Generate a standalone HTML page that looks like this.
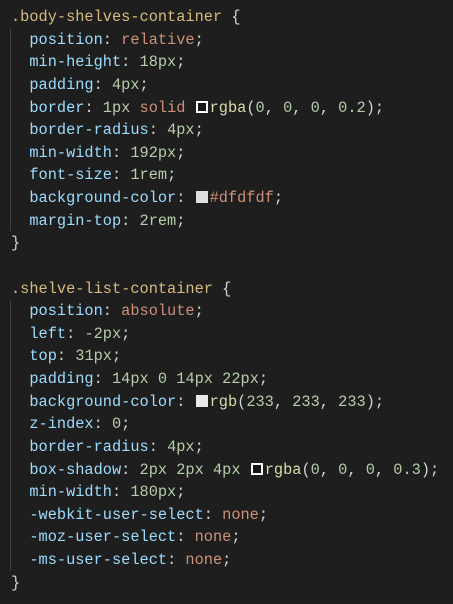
<!DOCTYPE html>
<html><head><meta charset="utf-8"><style>
html,body{margin:0;padding:0;background:#1e1e1e;width:453px;height:604px;overflow:hidden}
pre{margin:0;padding:6px 0 0 11px;font-family:"Liberation Mono",monospace;font-size:15.3px;line-height:22.62px;color:#d4d4d4;position:relative}
.s{color:#d7ba7d}.p{color:#9cdcfe}.v{color:#ce9178}.n{color:#b5cea8}.f{color:#dcdcaa}.b{color:#d4d4d4}
.sw{display:inline-block;width:8px;height:8px;border:2px solid #fff;vertical-align:-1px;margin:0 2px 0 1px}
.g{position:absolute;left:10px;width:1px;background:#404040}
</style></head><body>
<div class="g" style="top:28px;height:203px"></div>
<div class="g" style="top:300px;height:271px"></div>
<pre><span class="s">.body-shelves-container</span> <span class="b">{</span>
  <span class="p">position</span>: <span class="v">relative</span>;
  <span class="p">min-height</span>: <span class="n">18px</span>;
  <span class="p">padding</span>: <span class="n">4px</span>;
  <span class="p">border</span>: <span class="n">1px</span> <span class="v">solid</span> <span class="sw" style="background:rgba(0,0,0,.2)"></span><span class="f">rgba</span>(<span class="n">0</span>, <span class="n">0</span>, <span class="n">0</span>, <span class="n">0.2</span>);
  <span class="p">border-radius</span>: <span class="n">4px</span>;
  <span class="p">min-width</span>: <span class="n">192px</span>;
  <span class="p">font-size</span>: <span class="n">1rem</span>;
  <span class="p">background-color</span>: <span class="sw" style="background:#dfdfdf;border-color:#dfdfdf"></span><span class="v">#dfdfdf</span>;
  <span class="p">margin-top</span>: <span class="n">2rem</span>;
<span class="b">}</span>

<span class="s">.shelve-list-container</span> <span class="b">{</span>
  <span class="p">position</span>: <span class="v">absolute</span>;
  <span class="p">left</span>: <span class="n">-2px</span>;
  <span class="p">top</span>: <span class="n">31px</span>;
  <span class="p">padding</span>: <span class="n">14px</span> <span class="n">0</span> <span class="n">14px</span> <span class="n">22px</span>;
  <span class="p">background-color</span>: <span class="sw" style="background:#e9e9e9;border-color:#e9e9e9"></span><span class="f">rgb</span>(<span class="n">233</span>, <span class="n">233</span>, <span class="n">233</span>);
  <span class="p">z-index</span>: <span class="n">0</span>;
  <span class="p">border-radius</span>: <span class="n">4px</span>;
  <span class="p">box-shadow</span>: <span class="n">2px</span> <span class="n">2px</span> <span class="n">4px</span> <span class="sw" style="background:rgba(0,0,0,.3)"></span><span class="f">rgba</span>(<span class="n">0</span>, <span class="n">0</span>, <span class="n">0</span>, <span class="n">0.3</span>);
  <span class="p">min-width</span>: <span class="n">180px</span>;
  <span class="p">-webkit-user-select</span>: <span class="v">none</span>;
  <span class="p">-moz-user-select</span>: <span class="v">none</span>;
  <span class="p">-ms-user-select</span>: <span class="v">none</span>;
<span class="b">}</span></pre>
</body></html>
